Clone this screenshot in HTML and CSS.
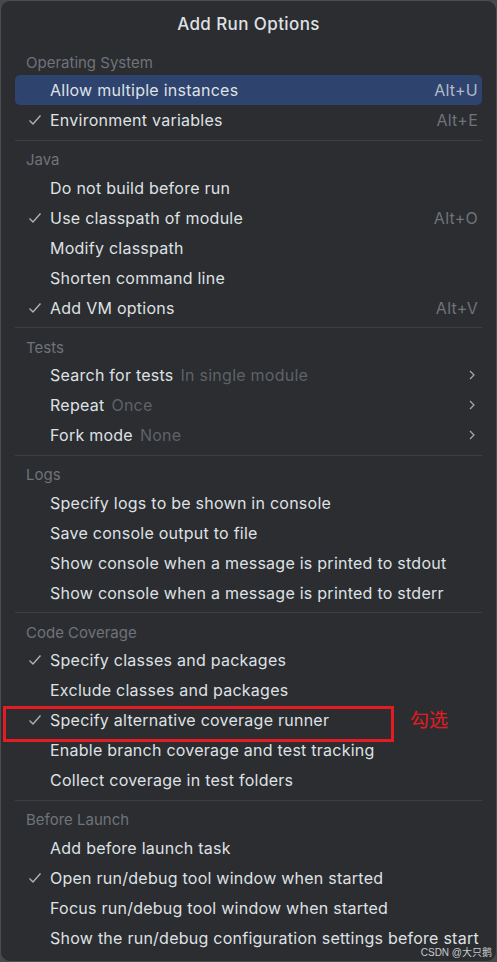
FILE: index.html
```html
<!DOCTYPE html>
<html>
<head>
<meta charset="utf-8">
<link rel="stylesheet" href="styles.css">
</head>
<body>
<div class="window">
  <div class="title">Add Run Options</div>

  <div class="section">
    <div class="header">Operating System</div>
    <div class="row selected"><span class="check"></span><span class="label">Allow multiple instances</span><span class="key">Alt+U</span></div>
    <div class="row"><span class="check"><svg width="14" height="12" viewBox="0 0 14 12"><polyline points="1.5,6.5 5,10 12.5,1.5" /></svg></span><span class="label">Environment variables</span><span class="key">Alt+E</span></div>
  </div>
  <div class="sep"></div>

  <div class="section">
    <div class="header">Java</div>
    <div class="row"><span class="check"></span><span class="label">Do not build before run</span></div>
    <div class="row"><span class="check"><svg width="14" height="12" viewBox="0 0 14 12"><polyline points="1.5,6.5 5,10 12.5,1.5" /></svg></span><span class="label">Use classpath of module</span><span class="key">Alt+O</span></div>
    <div class="row"><span class="check"></span><span class="label">Modify classpath</span></div>
    <div class="row"><span class="check"></span><span class="label">Shorten command line</span></div>
    <div class="row"><span class="check"><svg width="14" height="12" viewBox="0 0 14 12"><polyline points="1.5,6.5 5,10 12.5,1.5" /></svg></span><span class="label">Add VM options</span><span class="key">Alt+V</span></div>
  </div>
  <div class="sep"></div>

  <div class="section">
    <div class="header">Tests</div>
    <div class="row"><span class="check"></span><span class="label">Search for tests</span><span class="value">In single module</span><span class="arrow"><svg width="6" height="10" viewBox="0 0 6 10"><polyline points="1,1 5,5 1,9" /></svg></span></div>
    <div class="row"><span class="check"></span><span class="label">Repeat</span><span class="value">Once</span><span class="arrow"><svg width="6" height="10" viewBox="0 0 6 10"><polyline points="1,1 5,5 1,9" /></svg></span></div>
    <div class="row"><span class="check"></span><span class="label">Fork mode</span><span class="value">None</span><span class="arrow"><svg width="6" height="10" viewBox="0 0 6 10"><polyline points="1,1 5,5 1,9" /></svg></span></div>
  </div>
  <div class="sep"></div>

  <div class="section">
    <div class="header">Logs</div>
    <div class="row"><span class="check"></span><span class="label">Specify logs to be shown in console</span></div>
    <div class="row"><span class="check"></span><span class="label">Save console output to file</span></div>
    <div class="row"><span class="check"></span><span class="label">Show console when a message is printed to stdout</span></div>
    <div class="row"><span class="check"></span><span class="label">Show console when a message is printed to stderr</span></div>
  </div>
  <div class="sep"></div>

  <div class="section">
    <div class="header">Code Coverage</div>
    <div class="row"><span class="check"><svg width="14" height="12" viewBox="0 0 14 12"><polyline points="1.5,6.5 5,10 12.5,1.5" /></svg></span><span class="label">Specify classes and packages</span></div>
    <div class="row"><span class="check"></span><span class="label">Exclude classes and packages</span></div>
    <div class="row annotated"><span class="check"><svg width="14" height="12" viewBox="0 0 14 12"><polyline points="1.5,6.5 5,10 12.5,1.5" /></svg></span><span class="label">Specify alternative coverage runner</span><span class="redbox"></span><span class="note">勾选</span></div>
    <div class="row"><span class="check"></span><span class="label">Enable branch coverage and test tracking</span></div>
    <div class="row"><span class="check"></span><span class="label">Collect coverage in test folders</span></div>
  </div>
  <div class="sep"></div>

  <div class="section">
    <div class="header">Before Launch</div>
    <div class="row"><span class="check"></span><span class="label">Add before launch task</span></div>
    <div class="row"><span class="check"><svg width="14" height="12" viewBox="0 0 14 12"><polyline points="1.5,6.5 5,10 12.5,1.5" /></svg></span><span class="label">Open run/debug tool window when started</span></div>
    <div class="row"><span class="check"></span><span class="label">Focus run/debug tool window when started</span></div>
    <div class="row"><span class="check"></span><span class="label">Show the run/debug configuration settings before start</span></div>
  </div>

  <div class="watermark">CSDN @大只鹅</div>
</div>
</body>
</html>
```

FILE: styles.css
```css
* { box-sizing: border-box; }

html, body {
  margin: 0;
  padding: 0;
  background: #46484c;
}

body {
  width: 497px;
  height: 962px;
  overflow: hidden;
  font-family: Inter, "Noto Sans", "Noto Sans CJK SC", sans-serif;
  color: #dfe1e5;
}

.window {
  position: relative;
  width: 497px;
  height: 962px;
  background: #2b2d30;
  border: 1px solid #4b4d52;
  border-radius: 10px;
  overflow: hidden;
}

.title {
  height: 42px;
  padding-top: 4px;
  display: flex;
  align-items: center;
  justify-content: center;
  font-size: 17px;
  font-weight: 500;
  letter-spacing: 0.4px;
  color: #dfe1e5;
}

.section {
  padding-bottom: 4.5px;
}

.header {
  height: 24px;
  margin-top: 7px;
  margin-bottom: 1px;
  padding-left: 25px;
  display: flex;
  align-items: center;
  font-size: 15px;
  color: #6f737a;
}

.row {
  position: relative;
  height: 30px;
  margin: 0 14px;
  padding: 0 4px 0 11px;
  display: flex;
  align-items: center;
  font-size: 16px;
  letter-spacing: 0.25px;
  border-radius: 5px;
  white-space: nowrap;
}

.row.selected {
  background: #2e436e;
}

.check {
  width: 24px;
  flex: none;
  display: flex;
  align-items: center;
  padding-left: 2px;
}

.check svg polyline {
  fill: none;
  stroke: #aeb1b7;
  stroke-width: 1.4;
}

.label {
  color: #dfe1e5;
}

.value {
  margin-left: 7px;
  color: #5f6268;
}

.key {
  margin-left: auto;
  color: #6f737a;
}

.row.selected .key {
  color: #b3b9c8;
}

.arrow {
  margin-left: auto;
  padding-right: 3px;
  display: flex;
  align-items: center;
}

.arrow svg polyline {
  fill: none;
  stroke: #a8abb0;
  stroke-width: 1.2;
}

.sep {
  height: 1px;
  margin: 0 14px;
  background: #3c3e43;
}

.redbox {
  position: absolute;
  left: -12px;
  top: 1px;
  width: 391px;
  height: 36px;
  border: 3.5px solid #e51b22;
}

.note {
  position: absolute;
  left: 395px;
  top: 0;
  font-family: "Noto Sans CJK SC", sans-serif;
  font-size: 19px;
  letter-spacing: 0;
  color: #e51b22;
}

.watermark {
  position: absolute;
  right: 4px;
  bottom: 2px;
  font-family: "Liberation Sans", "Noto Sans CJK SC", sans-serif;
  font-size: 10px;
  color: #c9cacd;
}
```
